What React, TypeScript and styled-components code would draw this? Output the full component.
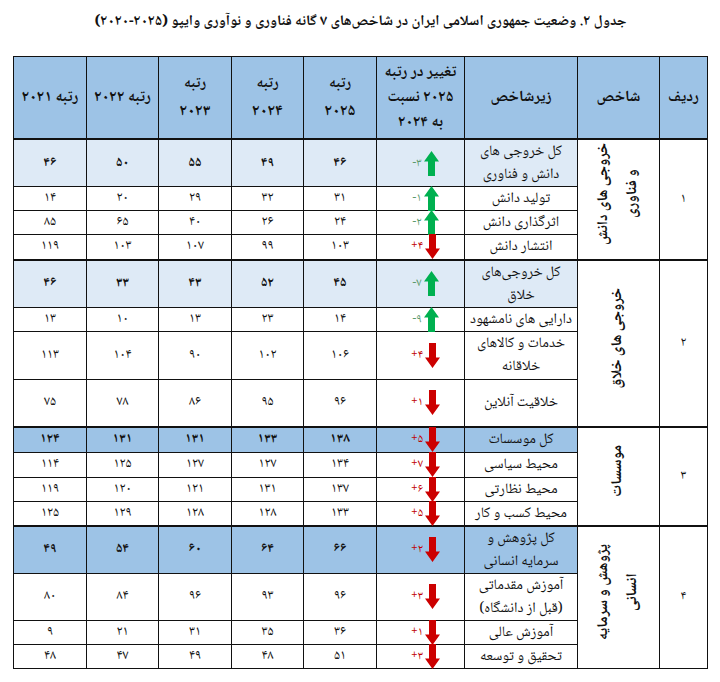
import React from 'react';
import styled, { createGlobalStyle } from 'styled-components';

const colors = {
  black: '#111111',
  header: '#9dc3e6',
  light: '#deeaf6',
  white: '#ffffff',
  up: '#00b050',
  upText: '#5b9a6c',
  down: '#cc0000',
  downText: '#c00000',
};

const FONT = '"Noto Naskh Arabic", "Noto Sans Arabic", "DejaVu Sans", sans-serif';

const GlobalStyle = createGlobalStyle`
  body {
    margin: 0;
    background: ${colors.white};
    font-family: ${FONT};
    color: ${colors.black};
  }
`;

type Change = { value: string; up: boolean };
type Row = {
  name: string[];
  change: Change;
  ranks: string[]; // 2025, 2024, 2023, 2022, 2021
  h: number;
  bg?: 'light' | 'dark';
};
type Group = { index: string; label: string[]; rows: Row[] };

const groups: Group[] = [
  {
    index: '۱',
    label: ['خروجی های دانش', 'و فناوری'],
    rows: [
      { name: ['کل خروجی های', 'دانش و فناوری'], change: { value: '-۳', up: true }, ranks: ['۴۶', '۴۹', '۵۵', '۵۰', '۴۶'], h: 47, bg: 'light' },
      { name: ['تولید دانش'], change: { value: '-۱', up: true }, ranks: ['۳۱', '۳۲', '۲۹', '۲۰', '۱۴'], h: 24 },
      { name: ['اثرگذاری دانش'], change: { value: '-۲', up: true }, ranks: ['۲۴', '۲۶', '۴۰', '۶۵', '۸۵'], h: 24 },
      { name: ['انتشار دانش'], change: { value: '+۴', up: false }, ranks: ['۱۰۳', '۹۹', '۱۰۷', '۱۰۳', '۱۱۹'], h: 25 },
    ],
  },
  {
    index: '۲',
    label: ['خروجی های خلاق'],
    rows: [
      { name: ['کل خروجی‌های', 'خلاق'], change: { value: '-۷', up: true }, ranks: ['۴۵', '۵۲', '۴۳', '۳۳', '۴۶'], h: 47, bg: 'light' },
      { name: ['دارایی های نامشهود'], change: { value: '-۹', up: true }, ranks: ['۱۴', '۲۳', '۱۳', '۱۰', '۱۳'], h: 24 },
      { name: ['خدمات و کالاهای', 'خلاقانه'], change: { value: '+۴', up: false }, ranks: ['۱۰۶', '۱۰۲', '۹۰', '۱۰۴', '۱۱۳'], h: 48 },
      { name: ['خلاقیت آنلاین'], change: { value: '+۱', up: false }, ranks: ['۹۶', '۹۵', '۸۶', '۷۸', '۷۵'], h: 48 },
    ],
  },
  {
    index: '۳',
    label: ['موسسات'],
    rows: [
      { name: ['کل موسسات'], change: { value: '+۵', up: false }, ranks: ['۱۳۸', '۱۳۳', '۱۳۱', '۱۳۱', '۱۲۴'], h: 25, bg: 'dark' },
      { name: ['محیط سیاسی'], change: { value: '+۷', up: false }, ranks: ['۱۳۴', '۱۲۷', '۱۲۷', '۱۲۵', '۱۱۴'], h: 25 },
      { name: ['محیط نظارتی'], change: { value: '+۶', up: false }, ranks: ['۱۳۷', '۱۳۱', '۱۲۱', '۱۲۰', '۱۱۹'], h: 24 },
      { name: ['محیط کسب و کار'], change: { value: '+۵', up: false }, ranks: ['۱۳۳', '۱۲۸', '۱۲۸', '۱۲۹', '۱۲۵'], h: 24 },
    ],
  },
  {
    index: '۴',
    label: ['پژوهش و سرمایه', 'انسانی'],
    rows: [
      { name: ['کل پژوهش و', 'سرمایه انسانی'], change: { value: '+۲', up: false }, ranks: ['۶۶', '۶۴', '۶۰', '۵۴', '۴۹'], h: 47, bg: 'dark' },
      { name: ['آموزش مقدماتی', '(قبل از دانشگاه)'], change: { value: '+۳', up: false }, ranks: ['۹۶', '۹۳', '۹۶', '۸۴', '۸۰'], h: 47 },
      { name: ['آموزش عالی'], change: { value: '+۱', up: false }, ranks: ['۳۶', '۳۵', '۳۱', '۲۱', '۹'], h: 24 },
      { name: ['تحقیق و توسعه'], change: { value: '+۳', up: false }, ranks: ['۵۱', '۴۸', '۴۹', '۴۷', '۴۸'], h: 24 },
    ],
  },
];

const widths = [48, 82, 113, 88, 73, 72, 73, 72, 73];

const Arrow = ({ up }: { up: boolean }) => (
  <ArrowSvg viewBox="0 0 15 25" $up={up}>
    <path
      d="M7.5 0 L15 10.5 L11 10.5 L11 25 L4 25 L4 10.5 L0 10.5 Z"
      fill={up ? colors.up : colors.down}
    />
  </ArrowSvg>
);

const App = () => {
  return (
    <Page>
      <GlobalStyle />
      <Title>
        جدول ۲. وضعیت جمهوری اسلامی ایران در شاخص‌های ۷ گانه فناوری و نوآوری وایپو{' '}
        <bdi dir="ltr">(۲۰۲۰-۲۰۲۵)</bdi>
      </Title>

      <Table>
        <colgroup>
          {widths.map((w, i) => (
            <col key={i} style={{ width: w }} />
          ))}
        </colgroup>
        <thead>
          <tr>
            <HeadCell>ردیف</HeadCell>
            <HeadCell>شاخص</HeadCell>
            <HeadCell>زیرشاخص</HeadCell>
            <HeadCell>
              تغییر در رتبه
              <br />
              ۲۰۲۵ نسبت
              <br />
              به ۲۰۲۴
            </HeadCell>
            <HeadCell>
              <HeadLine>رتبه</HeadLine>
              <Year>۲۰۲۵</Year>
            </HeadCell>
            <HeadCell>
              <HeadLine>رتبه</HeadLine>
              <Year>۲۰۲۴</Year>
            </HeadCell>
            <HeadCell>
              <HeadLine>رتبه</HeadLine>
              <Year>۲۰۲۳</Year>
            </HeadCell>
            <HeadCell>رتبه ۲۰۲۲</HeadCell>
            <HeadCell>رتبه ۲۰۲۱</HeadCell>
          </tr>
        </thead>
        {groups.map((g) => (
          <tbody key={g.index}>
            {g.rows.map((r, i) => (
              <BodyRow key={i} $h={r.h} $top={i === 0}>
                {i === 0 && (
                  <>
                    <IndexCell rowSpan={g.rows.length}>{g.index}</IndexCell>
                    <Cell rowSpan={g.rows.length}>
                      <SideLabel>
                        {g.label.map((l, k) => (
                          <React.Fragment key={k}>
                            {k > 0 && <br />}
                            {l}
                          </React.Fragment>
                        ))}
                      </SideLabel>
                    </Cell>
                  </>
                )}
                <NameCell $bg={r.bg}>
                  {r.name.map((n, k) => (
                    <React.Fragment key={k}>
                      {k > 0 && <br />}
                      {n}
                    </React.Fragment>
                  ))}
                </NameCell>
                <Cell $bg={r.bg}>
                  <ChangeBox>
                    <ChangeText $up={r.change.up}>{r.change.value}</ChangeText>
                    <Arrow up={r.change.up} />
                  </ChangeBox>
                </Cell>
                {r.ranks.map((v, k) => (
                  <RankCell key={k} $bg={r.bg} $bold={!!r.bg}>
                    {v}
                  </RankCell>
                ))}
              </BodyRow>
            ))}
          </tbody>
        ))}
      </Table>
    </Page>
  );
};

const Page = styled.div`
  width: 720px;
  height: 682px;
  padding: 11px 12px 0 13px;
  box-sizing: border-box;
  overflow: hidden;
`;

const Title = styled.div`
  direction: rtl;
  text-align: center;
  font-weight: 700;
  font-size: 14.7px;
  line-height: 22px;
  margin-bottom: 23px;
`;

const Table = styled.table`
  direction: rtl;
  width: 695px;
  table-layout: fixed;
  border-collapse: collapse;
  border: 1.5px solid ${colors.black};
`;

const HeadCell = styled.th`
  background: ${colors.header};
  border: 1.5px solid ${colors.black};
  height: 81px;
  padding: 0 2px;
  font-size: 15.5px;
  font-weight: 700;
  line-height: 25px;
  text-align: center;
  vertical-align: middle;
  white-space: nowrap;
`;

const HeadLine = styled.div`
  font-size: 15px;
  line-height: 22px;
`;

const Year = styled.div`
  font-size: 16px;
  line-height: 22px;
  margin-top: 6px;
`;

const BodyRow = styled.tr<{ $h: number; $top: boolean }>`
  height: ${(p) => p.$h}px;
  & > td {
    border-top: ${(p) => (p.$top ? '2.5px' : '1.5px')} solid ${colors.black};
  }
`;

const Cell = styled.td<{ $bg?: 'light' | 'dark' }>`
  border: 1.5px solid ${colors.black};
  padding: 0 2px;
  text-align: center;
  vertical-align: middle;
  background: ${(p) =>
    p.$bg === 'light' ? colors.light : p.$bg === 'dark' ? colors.header : colors.white};
`;

const IndexCell = styled(Cell)`
  font-size: 13px;
`;

const NameCell = styled(Cell)`
  font-size: 14.5px;
  line-height: 23px;
  white-space: nowrap;
`;

const RankCell = styled(Cell)<{ $bold: boolean }>`
  font-size: 13.5px;
  font-weight: ${(p) => (p.$bold ? 700 : 400)};
`;

const SideLabel = styled.span`
  display: inline-block;
  writing-mode: vertical-rl;
  transform: rotate(180deg);
  font-size: 15px;
  font-weight: 700;
  line-height: 29px;
  text-align: center;
  white-space: nowrap;
`;

const ChangeBox = styled.div`
  direction: ltr;
  display: flex;
  align-items: center;
  justify-content: center;
  gap: 2px;
  height: 0;
  padding-left: 10px;
`;

const ChangeText = styled.span<{ $up: boolean }>`
  font-size: 12px;
  color: ${(p) => (p.$up ? colors.upText : colors.downText)};
`;

const ArrowSvg = styled.svg<{ $up: boolean }>`
  width: 15px;
  height: 25px;
  flex: none;
  transform: ${(p) => (p.$up ? 'none' : 'rotate(180deg)')};
`;

export default App;
